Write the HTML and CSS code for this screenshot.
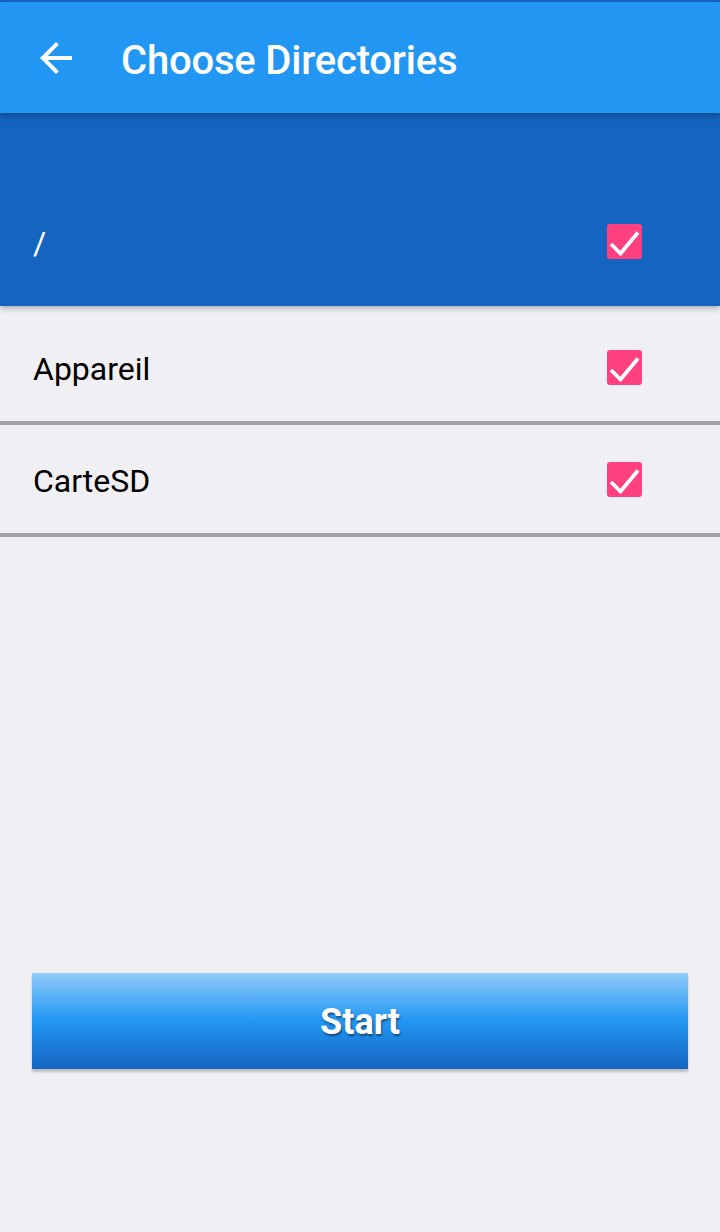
FILE: index.html
```html
<!DOCTYPE html>
<html>
<head>
<meta charset="utf-8">
<link rel="stylesheet" href="styles.css">
</head>
<body>
<div class="status"></div>
<header class="toolbar">
  <svg class="back" viewBox="0 0 24 24" width="48" height="48"><path d="M20 11H7.83l5.59-5.59L12 4l-8 8 8 8 1.41-1.41L7.83 13H20v-2z" fill="#fff"/></svg>
  <h1 class="title">Choose Directories</h1>
</header>
<section class="root">
  <div class="row row-root">
    <span class="label">/</span>
    <span class="check"><svg viewBox="0 0 35 35" width="35" height="35"><path d="M4 20l9.5 9.5L31 8.5" fill="none" stroke="#fff" stroke-width="3.8"/></svg></span>
  </div>
</section>
<div class="list">
  <div class="row row-item first">
    <span class="label">Appareil</span>
    <span class="check"><svg viewBox="0 0 35 35" width="35" height="35"><path d="M4 20l9.5 9.5L31 8.5" fill="none" stroke="#fff" stroke-width="3.8"/></svg></span>
  </div>
  <div class="divider"></div>
  <div class="row row-item">
    <span class="label">CarteSD</span>
    <span class="check"><svg viewBox="0 0 35 35" width="35" height="35"><path d="M4 20l9.5 9.5L31 8.5" fill="none" stroke="#fff" stroke-width="3.8"/></svg></span>
  </div>
  <div class="divider"></div>
</div>
<div class="actions">
  <button class="start">Start</button>
</div>
</body>
</html>
```
FILE: styles.css
```css
html, body {
  margin: 0;
  padding: 0;
  background: #efeff4;
  font-family: Roboto, "Liberation Sans", sans-serif;
  width: 720px;
  height: 1232px;
  overflow: hidden;
}
.status {
  height: 2px;
  background: #1565c0;
}
.toolbar {
  height: 111px;
  background: #2196f3;
  display: flex;
  align-items: center;
  position: relative;
  z-index: 2;
  box-shadow: 0 3px 6px rgba(0,0,0,0.28);
}
.back {
  margin-left: 32px;
  margin-top: 1px;
  flex: none;
}
.title {
  margin: 5px 0 0 41px;
  color: #fff;
  font-size: 40px;
  font-weight: 500;
  letter-spacing: -0.2px;
}
.root {
  background: #1565c0;
  height: 193px;
  display: flex;
  align-items: flex-end;
  position: relative;
  z-index: 1;
  box-shadow: 0 2px 6px rgba(0,0,0,0.3);
}
.row {
  display: flex;
  align-items: center;
  justify-content: space-between;
  padding: 0 78px 0 33px;
}
.row-root {
  width: 100%;
  height: 130px;
  box-sizing: border-box;
}
.label {
  font-size: 32px;
  color: #000;
  position: relative;
  top: 2px;
}
.row-root .label {
  color: #fff;
}
.check {
  width: 35px;
  height: 35px;
  background: #ff4081;
  border-radius: 3px;
  display: block;
  overflow: hidden;
}
.check svg {
  display: block;
}
.row-item {
  height: 108px;
}
.row-item.first {
  height: 115px;
  padding-top: 7px;
  box-sizing: border-box;
}
.divider {
  height: 4px;
  background: #a2a2a2;
}
.actions {
  padding: 436px 32px 0 32px;
}
.start {
  display: block;
  width: 656px;
  height: 96px;
  border: none;
  margin: 0;
  padding-top: 2px;
  background: linear-gradient(to bottom, #90caf9 0%, #2196f3 50%, #1565c0 100%);
  box-shadow: 0 3px 2px rgba(0,0,0,0.2);
  color: #fff;
  font-family: Roboto, "Liberation Sans", sans-serif;
  font-size: 36px;
  font-weight: 700;
  text-shadow: 1px 2px 2px rgba(0,0,0,0.45);
}
```
